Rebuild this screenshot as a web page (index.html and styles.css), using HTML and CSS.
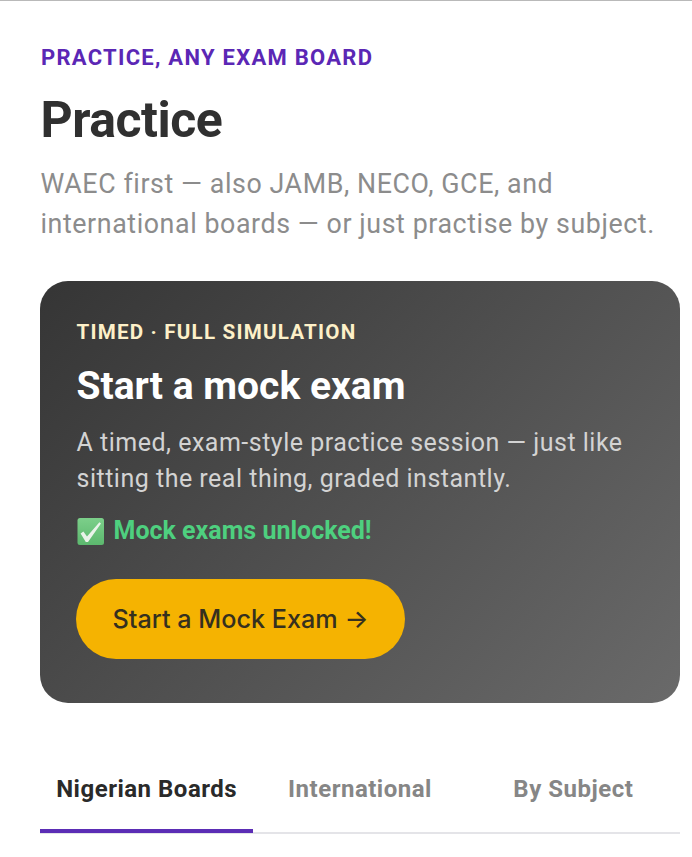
FILE: index.html
```html
<!DOCTYPE html>
<html lang="en">
<head>
<meta charset="utf-8">
<title>Practice</title>
<link rel="stylesheet" href="styles.css">
</head>
<body>
<main class="page">
  <div class="eyebrow">PRACTICE, ANY EXAM BOARD</div>
  <h1 class="title">Practice</h1>
  <p class="sub">WAEC first — also JAMB, NECO, GCE, and<br>international boards — or just practise by subject.</p>
  <section class="card">
    <div class="card-eyebrow">TIMED · FULL SIMULATION</div>
    <h2 class="card-title">Start a mock exam</h2>
    <p class="card-text">A timed, exam-style practice session — just like<br>sitting the real thing, graded instantly.</p>
    <div class="unlocked">
      <svg class="check" viewBox="0 0 28 28" aria-hidden="true">
        <defs>
          <linearGradient id="checkbg" x1="0" y1="0" x2="0" y2="1">
            <stop offset="0" stop-color="#7ccf8a"/>
            <stop offset="1" stop-color="#5cb86e"/>
          </linearGradient>
        </defs>
        <rect x="1.5" y="1" width="26.5" height="27" rx="2.5" fill="url(#checkbg)"/>
        <path d="M4.6 16.6 L7.4 14.6 L11 19.4 L23.4 5.2 L25 6.4 L12 25 L9.8 25 Z" fill="#eaf3ea"/>
      </svg>
      <span>Mock exams unlocked!</span>
    </div>
    <button class="cta">Start a Mock Exam →</button>
  </section>
  <nav class="tabs">
    <div class="tab active">Nigerian Boards</div>
    <div class="tab">International</div>
    <div class="tab">By Subject</div>
  </nav>
</main>
</body>
</html>
```
FILE: styles.css
```css
* { box-sizing: border-box; }
html, body { margin: 0; padding: 0; background: #fff; }
body { font-family: Roboto, "Liberation Sans", sans-serif; width: 692px; height: 857px; overflow: hidden; }
.page { border-top: 1px solid #b9b9b9; padding: 44px 12px 0 40px; }
.eyebrow { font-size: 22px; line-height: 26px; font-weight: 700; letter-spacing: 1.27px; color: #5b27b5; padding-left: 1px; }
.title { margin: 20px 0 0; padding-left: 0.5px; font-size: 50px; line-height: 58px; font-weight: 700; letter-spacing: -0.5px; color: #303030; }
.sub { margin: 15px 0 0; padding-left: 0.5px; font-size: 26.8px; line-height: 40px; color: #8c8c8c; letter-spacing: 0.58px; white-space: nowrap; }
.card { margin-top: 37px; width: 640px; height: 422px; border-radius: 28px; padding: 38px 36.5px 0; background: linear-gradient(135deg, #353535, #6a6a6a); }
.card-eyebrow { font-size: 20.6px; line-height: 26px; font-weight: 700; letter-spacing: 1.2px; color: #fdf0c8; }
.card-title { margin: 18px 0 0; font-size: 39px; line-height: 46px; font-weight: 700; color: #fff; }
.card-text { margin: 16px 0 0; font-size: 25px; line-height: 36px; color: #d3d3d3; letter-spacing: 0.5px; white-space: nowrap; }
.unlocked { margin: 18px 0 0 -0.5px; display: flex; align-items: center; gap: 9.5px; font-size: 25px; line-height: 32px; font-weight: 700; color: #4ed07f; }
.check { width: 28px; height: 28px; flex: none; }
.cta { margin: 32px 0 0 -0.5px; display: block; width: 329px; height: 80px; border: 0; border-radius: 40px; background: #f5b301; color: #35301f; font-family: Inter, Roboto, sans-serif; font-size: 25.2px; font-weight: 500; text-align: center; padding: 0; }
.tabs { margin-top: 55px; width: 640px; display: grid; grid-template-columns: repeat(3, 1fr); border-bottom: 2px solid #e4e4e8; }
.tab { height: 75px; padding-top: 16px; text-align: center; font-size: 24px; line-height: 30px; font-weight: 700; letter-spacing: 0.5px; color: #868686; margin-bottom: -1px; }
.tab.active { color: #2a2a2a; border-bottom: 4px solid #5b2db5; }
```
